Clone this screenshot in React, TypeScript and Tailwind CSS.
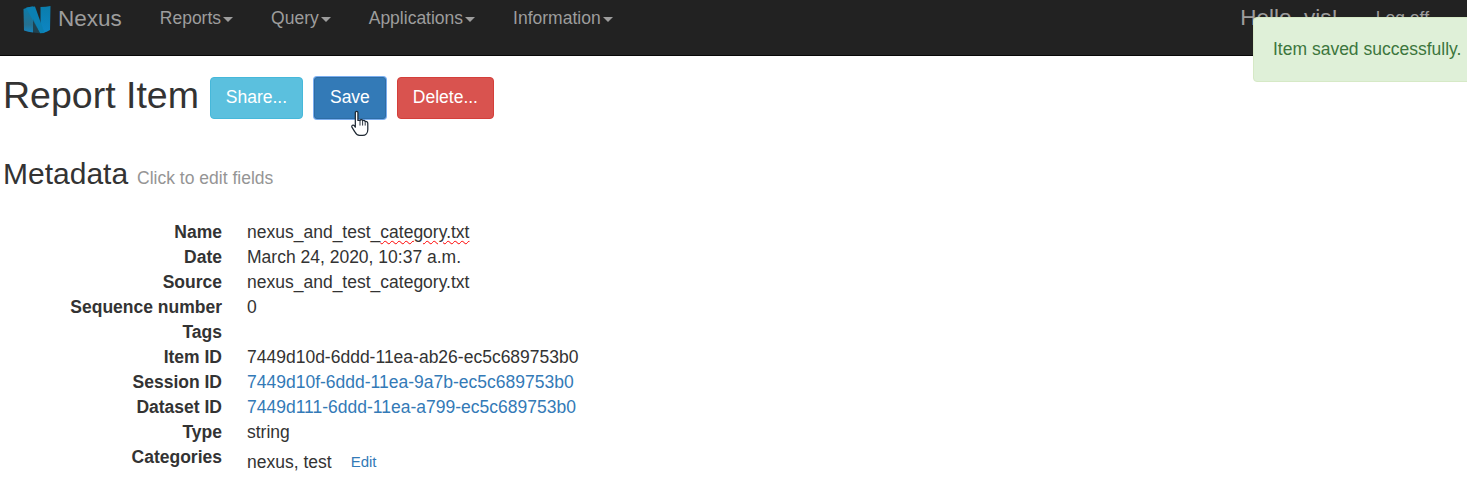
const NAV = ['Reports', 'Query', 'Applications', 'Information']

const ROWS: [string, string, 'text' | 'link' | 'spell'][] = [
  ['Name', 'nexus_and_test_', 'spell'],
  ['Date', 'March 24, 2020, 10:37 a.m.', 'text'],
  ['Source', 'nexus_and_test_category.txt', 'text'],
  ['Sequence number', '0', 'text'],
  ['Tags', '', 'text'],
  ['Item ID', '7449d10d-6ddd-11ea-ab26-ec5c689753b0', 'text'],
  ['Session ID', '7449d10f-6ddd-11ea-9a7b-ec5c689753b0', 'link'],
  ['Dataset ID', '7449d111-6ddd-11ea-a799-ec5c689753b0', 'link'],
  ['Type', 'string', 'text'],
]

function Logo() {
  return (
    <svg width="28" height="29" viewBox="0 0 28 29" className="shrink-0">
      <defs>
        <linearGradient id="nxl" x1="0" y1="0" x2="0" y2="1">
          <stop offset="0" stopColor="#0b7cab" />
          <stop offset="0.7" stopColor="#26708f" />
          <stop offset="1" stopColor="#1583bd" />
        </linearGradient>
        <linearGradient id="nxr" x1="0" y1="0" x2="0" y2="1">
          <stop offset="0" stopColor="#0a7dac" />
          <stop offset="1" stopColor="#0d86c4" />
        </linearGradient>
      </defs>
      <path d="M0.5 4 Q4 2 10 1.5 L10 27.5 Q5 27 1 25.5 Z" fill="url(#nxl)" />
      <path d="M17.5 2 Q23 2 27.5 1 L27 25 Q24 27 20 28 L17.5 24 Z" fill="url(#nxr)" />
      <path d="M3 2.8 Q8 1.5 12 1.5 L21.5 28 L17 28.3 Z" fill="#0b80b2" />
      <path d="M10 14 L17 28.3 L10 27.5 Z" fill="#1f5c76" opacity="0.55" />
    </svg>
  )
}

function HandCursor() {
  return (
    <svg width="20" height="27" viewBox="0 0 18 26" className="absolute left-[350px] top-[110px]">
      <path
        d="M4.5 2.5 C4.5 1 7 1 7 2.5 L7 10 L9 10 C9.5 9 11 9 11.5 10.2 C12.5 9.6 13.5 10 14 11 C15.2 10.6 16.5 11.4 16.5 13 L16.5 19 C16.5 22 14.5 24.5 11.5 24.5 L8.5 24.5 C6 24.5 5 23 4 21 L1.2 16.5 C0.5 15 2.4 13.8 3.5 15 L4.5 16.5 Z"
        fill="#ffffff"
        stroke="#1f2933"
        strokeWidth="1.2"
        strokeLinejoin="round"
      />
      <path d="M9 10 L9 15 M11.5 10.2 L11.5 15 M14 11 L14 15" stroke="#1f2933" strokeWidth="0.9" fill="none" />
    </svg>
  )
}

export default function App() {
  return (
    <div className="relative h-[486px] w-[1467px] overflow-hidden bg-white font-['Liberation_Sans',Arial,sans-serif] text-[17.5px] text-[#333333]">
      <nav className="flex h-[56px] items-start border-b border-[#080808] bg-[#222222] text-[#9d9d9d]">
        <div className="flex h-[38px] items-center pl-[23px]">
          <Logo />
          <span className="ml-[7px] text-[22.5px]">Nexus</span>
        </div>
        <ul className="ml-[38px] flex h-[36px] items-center gap-[38px]">
          {NAV.map((n) => (
            <li key={n} className="flex items-center">
              {n}
              <span className="ml-[2px] mt-[2px] h-0 w-0 border-x-[5.5px] border-t-[5px] border-x-transparent border-t-[#9d9d9d]" />
            </li>
          ))}
        </ul>
        <div className="ml-auto flex h-[36px] items-center pr-[38px]">
          <span className="text-[22.5px]">Hello, vis!</span>
          <span className="ml-[38px]">Log off</span>
        </div>
      </nav>

      <div className="absolute left-[1253px] top-[17px] flex h-[65px] w-[230px] items-center rounded-[4px] border border-[#d6e9c6] bg-[#dff0d8] pl-[19px] text-[#3c763d]">
        <span className="whitespace-nowrap">Item saved successfully.</span>
      </div>

      <div className="flex items-start pl-[3px] pt-[21px]">
        <h1 className="-mt-px text-[37.5px] leading-[38px]">Report Item</h1>
        <div className="ml-[11px] flex gap-[11px]">
          <button className="h-[42px] w-[93px] rounded-[4px] border border-[#46b8da] bg-[#5bc0de] pb-[2px] text-white">Share...</button>
          <button className="h-[42px] w-[72px] rounded-[3px] border border-[#2e6da4] bg-[#337ab7] pb-[2px] text-white ring-1 ring-[#7aaef0]">Save</button>
          <button className="h-[42px] w-[97px] rounded-[4px] border border-[#d43f3a] bg-[#d9534f] pb-[2px] text-white">Delete...</button>
        </div>
      </div>
      <HandCursor />

      <div className="mt-[37px] flex items-baseline pl-[3px]">
        <h2 className="text-[30px] leading-[36px]">Metadata</h2>
        <small className="ml-[9px] text-[17.5px] text-[#959595]">Click to edit fields</small>
      </div>

      <dl className="mt-[28px]">
        {ROWS.map(([label, value, kind]) => (
          <div key={label} className="flex h-[25px] items-center">
            <dt className="w-[222px] text-right font-bold">{label}</dt>
            <dd className={`ml-[25px] ${kind === 'link' ? 'text-[#337ab7]' : ''}`}>
              {value}
              {kind === 'spell' && (
                <span className="underline decoration-[#ff0000] decoration-wavy decoration-1 underline-offset-2">
                  category.txt
                </span>
              )}
            </dd>
          </div>
        ))}
        <div className="-mt-px flex items-start">
          <dt className="w-[222px] text-right font-bold">Categories</dt>
          <dd className="ml-[25px] mt-[5px] flex items-center">
            nexus, test
            <a className="ml-[19px] text-[15px] text-[#337ab7]">Edit</a>
          </dd>
        </div>
      </dl>
    </div>
  )
}
